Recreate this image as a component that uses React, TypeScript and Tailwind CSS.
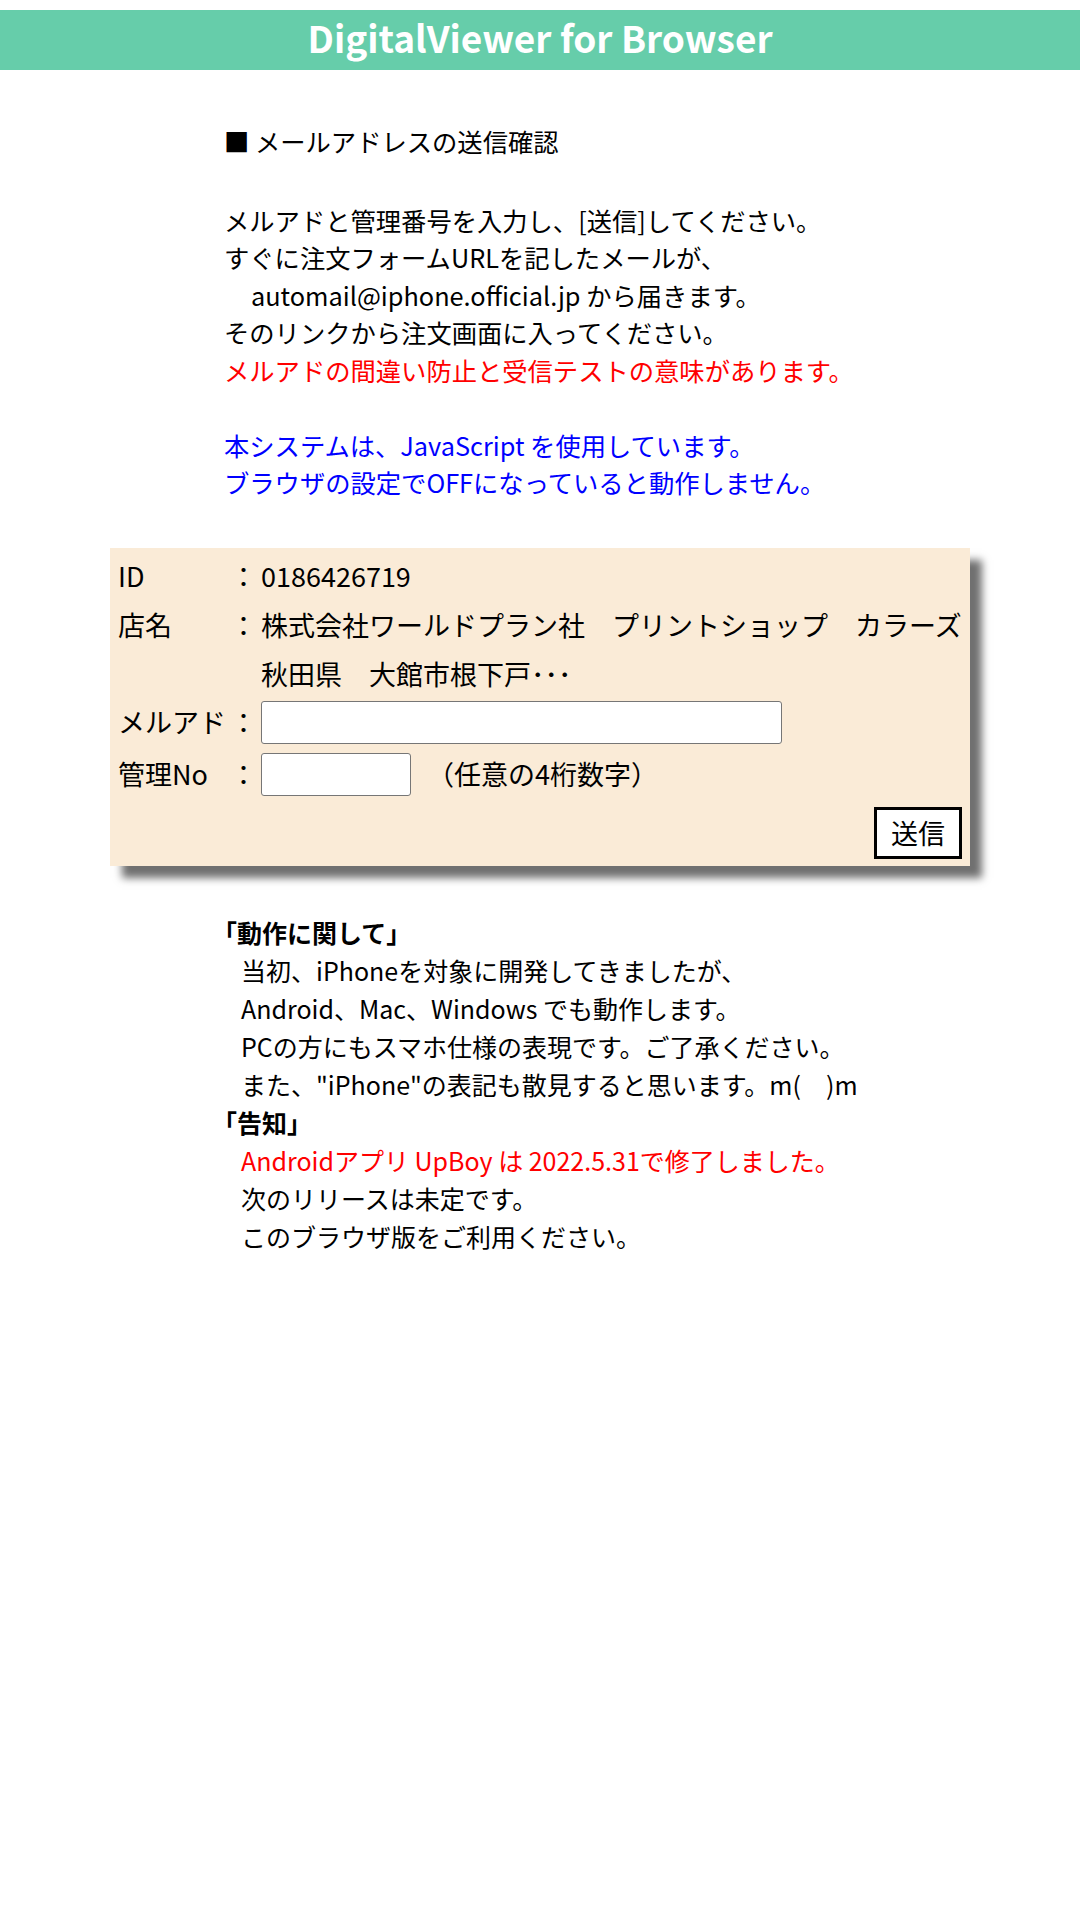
import React from "react";

const InfoRow = ({ label, colon = true, children }: { label?: string; colon?: boolean; children: React.ReactNode }) => (
  <div className="flex h-[49px] items-center whitespace-nowrap">
    <span className="w-[112px]">{label}</span>
    <span className="w-[27px]">{colon ? "：" : ""}</span>
    <span className="ml-[4px]">{children}</span>
  </div>
);

const App = () => {
  return (
    <div className="min-h-[1920px] w-[1080px] bg-white pt-[10px] font-['Noto_Sans_CJK_JP',sans-serif] text-black">
      {/* ヘッダー */}
      <header className="flex h-[60px] items-center justify-center bg-[#66cdaa] pb-[4px] text-[37px] font-bold text-white">
        DigitalViewer for Browser
      </header>

      {/* 説明文 */}
      <section className="mt-[53px] pl-[224px] text-[25.3px] leading-[37.5px] whitespace-nowrap">
        <p>■ メールアドレスの送信確認</p>
        <div className="mt-[41px]">
          <p>メルアドと管理番号を入力し、[送信]してください。</p>
          <p>すぐに注文フォームURLを記したメールが、</p>
          <p className="pl-[27px]">automail@iphone.official.jp から届きます。</p>
          <p>そのリンクから注文画面に入ってください。</p>
          <p className="text-[#ff0000]">メルアドの間違い防止と受信テストの意味があります。</p>
          <p className="mt-[37.5px] text-[#0000ff]">本システムは、JavaScript を使用しています。</p>
          <p className="text-[#0000ff]">ブラウザの設定でOFFになっていると動作しません。</p>
        </div>
      </section>

      {/* 入力フォーム */}
      <form className="mx-auto mt-[46px] w-[860px] bg-[#faebd7] px-[8px] pt-[4px] pb-[7px] text-[27px] shadow-[12px_12px_8px_#707070]">
        <InfoRow label="ID">0186426719</InfoRow>
        <InfoRow label="店名">株式会社ワールドプラン社　プリントショップ　カラーズ</InfoRow>
        <InfoRow colon={false}>秋田県　大館市根下戸･･･</InfoRow>
        <div className="flex h-[48px] items-center">
          <span className="w-[112px]">メルアド</span>
          <span className="w-[27px]">：</span>
          <input
            type="email"
            className="ml-[4px] h-[43px] w-[521px] rounded-[3px] border border-[#767676] bg-white px-2 text-[22px]"
          />
        </div>
        <div className="flex h-[56px] items-center">
          <span className="w-[112px]">管理No</span>
          <span className="w-[27px]">：</span>
          <input
            type="text"
            className="ml-[4px] h-[43px] w-[150px] rounded-[3px] border border-[#767676] bg-white px-2 text-[22px]"
          />
          <span className="ml-[16px]">（任意の4桁数字）</span>
        </div>
        <div className="mt-[4px] flex justify-end">
          <button
            type="button"
            className="h-[52px] w-[88px] border-[3px] border-black bg-white text-[27px] leading-none"
          >
            送信
          </button>
        </div>
      </form>

      {/* お知らせ */}
      <section className="mt-[47px] pl-[224px] text-[25px] leading-[38px] whitespace-nowrap">
        <p className="-ml-[12px] font-bold">「動作に関して」</p>
        <p className="pl-[17px]">当初、iPhoneを対象に開発してきましたが、</p>
        <p className="pl-[17px]">Android、Mac、Windows でも動作します。</p>
        <p className="pl-[17px]">PCの方にもスマホ仕様の表現です。ご了承ください。</p>
        <p className="pl-[17px]">また、"iPhone"の表記も散見すると思います。m(　)m</p>
        <p className="-ml-[12px] font-bold">「告知」</p>
        <p className="pl-[17px] text-[#ff0000]">Androidアプリ UpBoy は 2022.5.31で修了しました。</p>
        <p className="pl-[17px]">次のリリースは未定です。</p>
        <p className="pl-[17px]">このブラウザ版をご利用ください。</p>
      </section>
    </div>
  );
};

export default App;
